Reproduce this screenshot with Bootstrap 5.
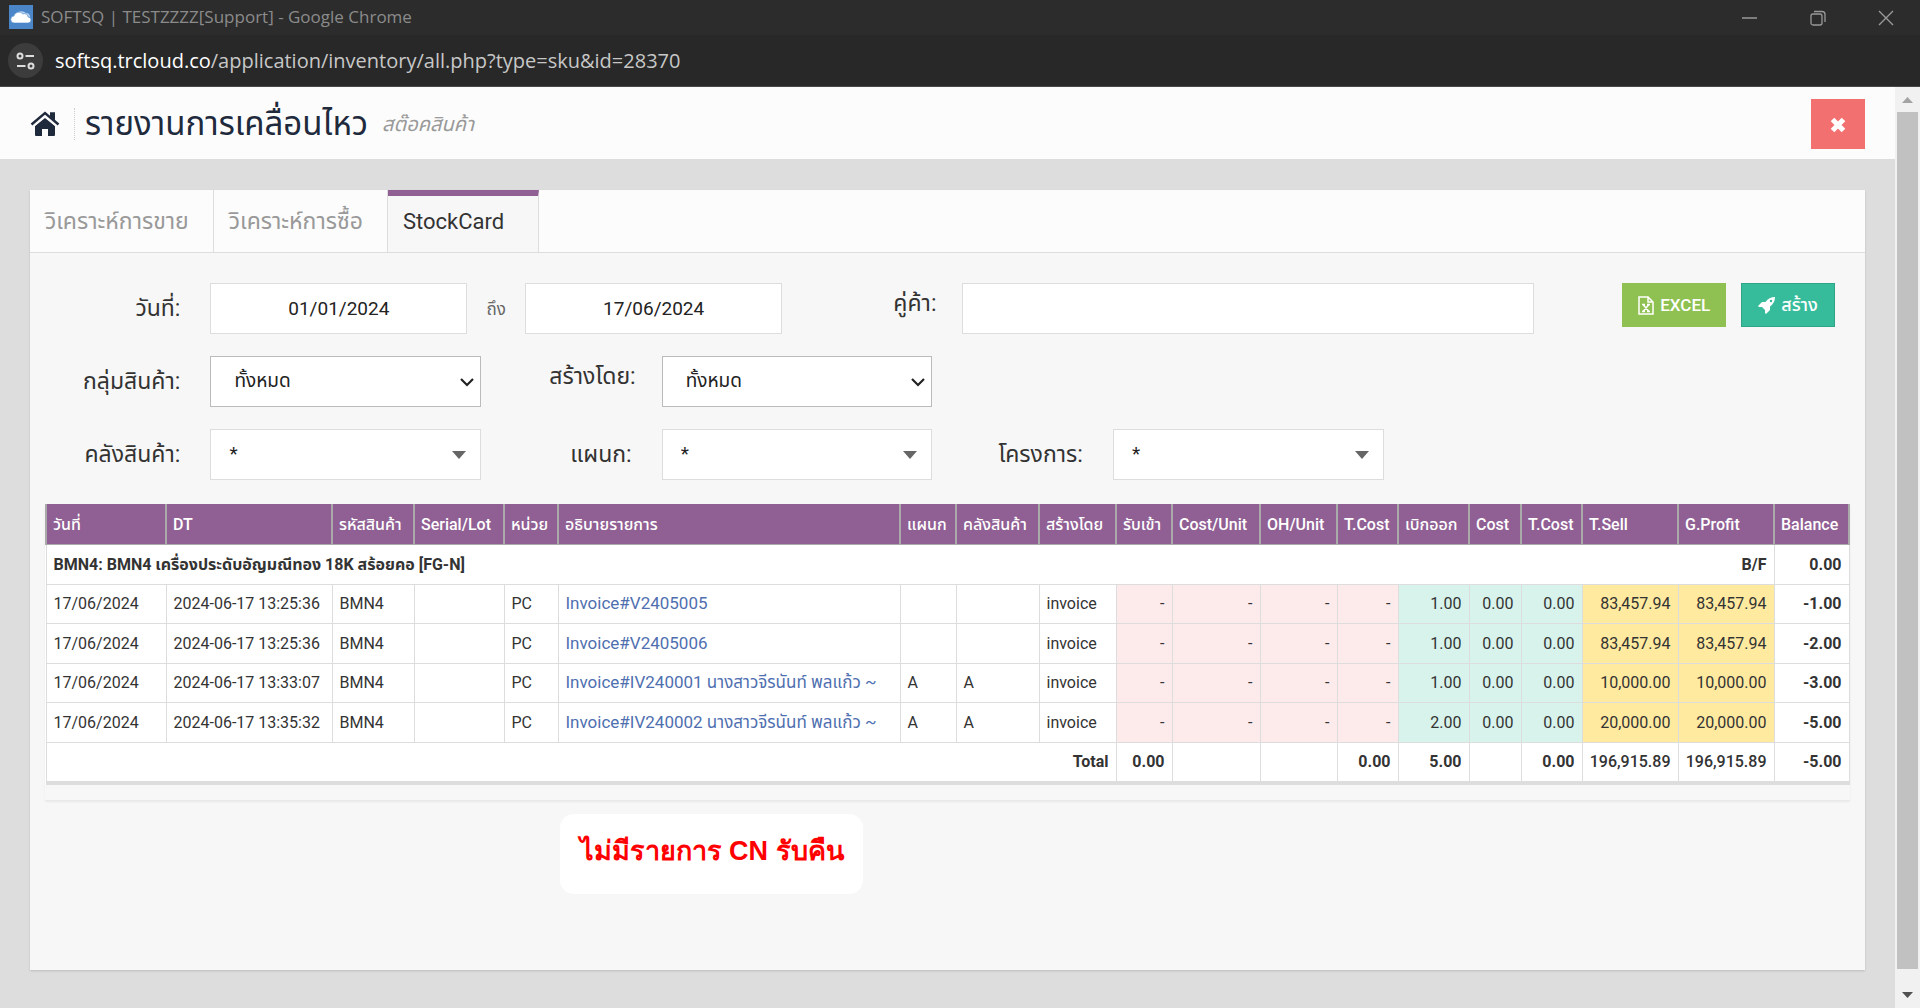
<!DOCTYPE html>
<html lang="th">
<head>
<meta charset="utf-8">
<meta name="viewport" content="width=device-width, initial-scale=1">
<title>SOFTSQ | TESTZZZZ[Support]</title>
<link href="https://cdn.jsdelivr.net/npm/bootstrap@5.3.0/dist/css/bootstrap.min.css" rel="stylesheet">
<style>
body{font-family:Roboto,"Noto Sans Thai",sans-serif;font-size:16px;line-height:24px;color:#333;background:#ddd;min-height:100vh}
.chrome-title{background:#2c2c2c;color:#8b8b8b;height:35px;font:17px/24px "Open Sans",sans-serif;padding:0 0 2px 9px}
.chrome-title button{width:68px;height:33px;background:none;border:0;padding:0;color:#999}
.chrome-url{background:#282828;color:#c7c7c7;height:52px;border-bottom:1px solid #484848;font:20px/28px "Open Sans",sans-serif;padding-left:8px}
.chrome-url b{font-weight:400;color:#fff}
.site-info{width:35px;height:35px;border-radius:50%;background:#3c3c3c;border:0;padding:0}
.page-head{background:#fcfcfc;height:72px;padding:2px 30px 0}
.home-link{color:#1f2a3c;width:45px;height:32px;border-right:1px dotted #ccc}
.page-head h1{font-size:33px;line-height:40px;font-weight:400;color:#1f2a3c;margin-left:10px}
.sub-title{font-size:20px;color:#999;margin-left:14px}
.btn-shut{width:54px;height:50px;background:#f27170;color:#fff;border-radius:0;padding:0}
.page-main{padding:31px 30px 38px}
.panel{background:#f7f7f7;box-shadow:0 1px 2px rgba(0,0,0,.15)}
.report-tabs{background:#fcfcfc;border-bottom:1px solid #ddd;height:63px}
.report-tabs .nav-link{height:62px;padding:6px 24px 4px 15px;border:0;border-right:1px solid #ddd;border-radius:0;color:#999;font-size:23px;line-height:52px}
.report-tabs .nav-link.active{background:#f7f7f7;color:#333;border-top:6px solid #906094;padding-top:0;padding-right:34px;font-size:22px}
.panel-body{padding:30px 15px 76px}
.filter-row{--bs-gutter-x:30px;margin:0 0 22px}
.filter-row label{font-size:23px;line-height:52px;text-align:right;display:block;white-space:nowrap}
.filter-row .label-high{line-height:42px;margin-right:-4px}
.filter-row [class^="col-1"]{display:flex;justify-content:flex-end;height:51px}
.box-field{height:51px;border:1px solid #ddd;border-radius:0;font-size:19px;color:#222;background-color:#fff;padding:0 20px}
.box-field.native{border-color:#bbb;background:#fff url("data:image/svg+xml,%3Csvg xmlns='http://www.w3.org/2000/svg' viewBox='0 0 14 10'%3E%3Cpath d='M1 2l6 6 6-6' fill='none' stroke='%23222' stroke-width='2.2'/%3E%3C/svg%3E") no-repeat right 6px center/14px 10px;padding-left:23px}
.box-field.search{background:#fff url("data:image/svg+xml,%3Csvg xmlns='http://www.w3.org/2000/svg' viewBox='0 0 14 8'%3E%3Cpath d='M0 0h14L7 8z' fill='%23666'/%3E%3C/svg%3E") no-repeat right 14px center/14px 8px;padding-left:18px}
.until{width:58px;font-size:17px;color:#666}
.btn-tool{height:44px;border-radius:0;color:#fff;font-size:17px;line-height:24px;font-weight:500;padding:0 15px;display:inline-flex;align-items:center;gap:6px}
.btn-excel{background:#8fc152}
.btn-make{background:#37bc9b;border:1px solid #2fa588;margin-left:15px;font-size:18px;padding:0 16px}
.stock-wrap{margin-top:24px;box-shadow:0 2px 2px rgba(0,0,0,.06);padding-bottom:15px}
.stock{width:100%;table-layout:fixed;border-collapse:collapse;background:#fff;border-bottom:4px solid #ddd;border-top:2px solid #906094}
.stock th,.stock td{border:1px solid #ddd;padding:7px;white-space:nowrap;height:39px;line-height:24px}
.stock tbody tr:nth-child(odd) > *{height:40px}
.stock thead th{background:#906094;color:#fff;border:2px solid #aaa;border-top-width:1px;border-bottom-width:1px;font-weight:500;padding:7px 6px}
.stock tbody th,.stock tfoot th,.stock tfoot td{font-weight:700}
.stock tfoot .sum{font-weight:500}
.stock .num{text-align:right}
.stock .c-in{background:#fdeaea}
.stock .c-out{background:#d8f3ec}
.stock .c-sell{background:#ffeaa0}
.stock a{color:#4f6fb0;text-decoration:none;font-size:17px;line-height:20px}
.note{margin:14px 0 0 515px;width:303px;height:80px;border-radius:14px;background:#fff;color:#f00;font:700 27px/74px "Liberation Sans",sans-serif;text-align:center;white-space:nowrap}
.rail{width:25px;background:#f1f1f1;padding:0 2px}
.rail .thumb{background:#c1c1c1}
</style>
<script src="https://cdn.jsdelivr.net/npm/bootstrap@5.3.0/dist/js/bootstrap.bundle.min.js"></script>
</head>
<body class="d-flex flex-column">
<header>
  <div class="chrome-title d-flex align-items-center">
    <svg width="24" height="24" viewBox="0 0 24 24" aria-hidden="true"><path fill="#4a86c8" d="M0 0h24v24H0z"/><path fill="#b5d0ee" d="M4 13a4 4 0 0 1 3-4 6 5 0 0 1 10-1 4 4 0 0 1 4 4z"/><path fill="#fff" stroke="#4a86c8" stroke-width=".6" d="M5.500 18a3.500 3.500 0 0 1-.5-7A5 4.500 0 0 1 14 9a3.500 3.500 0 0 1 5 3 3 3 0 0 1 0 6z"/></svg>
    <span class="ms-2 me-auto">SOFTSQ | TESTZZZZ[Support] - Google Chrome</span>
    <button type="button" aria-label="Minimize"><svg width="16" height="16" viewBox="0 0 16 16"><path d="M0 8h15" stroke="currentColor" stroke-width="1.500"/></svg></button>
    <button type="button" aria-label="Restore"><svg width="16" height="16" viewBox="0 0 16 16" fill="none" stroke="currentColor" stroke-width="1.300"><rect x="1" y="4" width="11" height="11" rx="2"/><path d="M4 1.500h8a3 3 0 0 1 3 3V12"/></svg></button>
    <button type="button" aria-label="Close window"><svg width="16" height="16" viewBox="0 0 16 16"><path d="M1 1l14 14M15 1L1 15" stroke="currentColor" stroke-width="1.400"/></svg></button>
  </div>
  <div class="chrome-url d-flex align-items-center">
    <button type="button" class="site-info d-flex align-items-center justify-content-center" aria-label="Site information"><svg width="19" height="18" viewBox="0 0 19 18" fill="none" stroke="#ddd" stroke-width="2"><circle cx="4" cy="4" r="2.500"/><path d="M9.500 4H18M1 14h8.500"/><circle cx="15" cy="14" r="2.500"/></svg></button>
    <span class="url-text ms-2 ps-1"><b>softsq.trcloud.co</b>/application/inventory/all.php?type=sku&amp;id=28370</span>
  </div>
</header>
<div class="d-flex flex-grow-1">
  <div class="flex-grow-1">
    <div class="page-head d-flex align-items-center">
      <a href="#" class="home-link d-flex align-items-center" aria-label="Home"><svg width="30" height="26" viewBox="0 0 30 26" fill="currentColor"><path d="M5 15L15 7l10 8v9q0 1-1 1h-6v-7h-6v7H6q-1 0-1-1z"/><path d="M20 1.500h5v8h-5z"/><path d="M1.500 14.500L15 3l13.500 11.500" fill="none" stroke="#fcfcfc" stroke-width="5"/><path d="M20 1.500h5v8l-5-4z"/><path d="M1.500 13.500L15 2l13.500 11.500" fill="none" stroke="currentColor" stroke-width="2.400"/></svg></a>
      <h1 class="mb-0">รายงานการเคลื่อนไหว</h1>
      <em class="sub-title me-auto">สต๊อคสินค้า</em>
      <button type="button" class="btn btn-shut" aria-label="Close"><svg width="16" height="16" viewBox="0 0 16 16"><path d="M2.500 2.500l11 11M13.500 2.500l-11 11" stroke="#fff" stroke-width="5"/></svg></button>
    </div>
    <main class="page-main">
      <div class="panel">
        <nav class="report-tabs nav">
          <a class="nav-link" href="#">วิเคราะห์การขาย</a>
          <a class="nav-link" href="#">วิเคราะห์การซื้อ</a>
          <a class="nav-link active" href="#" aria-current="page">StockCard</a>
        </nav>
        <div class="panel-body">
          <form>
            <div class="row filter-row">
              <div class="col-1"><label for="d1">วันที่:</label></div>
              <div class="col-4 d-flex align-items-center">
                <input id="d1" class="form-control box-field text-center" value="01/01/2024">
                <span class="until flex-shrink-0 text-center">ถึง</span>
                <input class="form-control box-field text-center" value="17/06/2024" aria-label="ถึง">
              </div>
              <div class="col-1"><label class="label-high" for="partner">คู่ค้า:</label></div>
              <div class="col-4"><input id="partner" class="form-control box-field"></div>
              <div class="col-2 d-flex justify-content-end align-items-start">
                <button type="button" class="btn btn-tool btn-excel"><svg width="16" height="19" viewBox="0 0 16 19" fill="none" stroke="#fff" stroke-width="1.500"><path d="M1 1h9l5 5v12H1zM10 1v5h5"/><path d="M5 8.500l6 7M11 8.500l-6 7M4 8.500h3M9 8.500h3M4 15.500h3M9 15.500h3"/></svg>EXCEL</button>
                <button type="button" class="btn btn-tool btn-make"><svg width="17" height="17" viewBox="0 0 17 17" fill="#fff"><path fill-rule="evenodd" d="M17 0q0 6-5 9.500V13l-4 4-1-1v-3L4 10H1L0 9l4-4h3.500Q11 0 17 0zM13 5.200a1.200 1.200 0 1 0 0-2.400 1.200 1.200 0 0 0 0 2.400z"/></svg>สร้าง</button>
              </div>
            </div>
            <div class="row filter-row">
              <div class="col-1"><label for="grp">กลุ่มสินค้า:</label></div>
              <div class="col-2"><select id="grp" class="form-select box-field native"><option>ทั้งหมด</option></select></div>
              <div class="col-1"><label class="label-high" for="maker">สร้างโดย:</label></div>
              <div class="col-2"><select id="maker" class="form-select box-field native"><option>ทั้งหมด</option></select></div>
            </div>
            <div class="row filter-row mb-0">
              <div class="col-1"><label for="wh">คลังสินค้า:</label></div>
              <div class="col-2"><select id="wh" class="form-select box-field search"><option>*</option></select></div>
              <div class="col-1"><label for="dep">แผนก:</label></div>
              <div class="col-2"><select id="dep" class="form-select box-field search"><option>*</option></select></div>
              <div class="col-1"><label for="proj">โครงการ:</label></div>
              <div class="col-2"><select id="proj" class="form-select box-field search"><option>*</option></select></div>
            </div>
          </form>
          <div class="stock-wrap">
          <table class="stock">
            <colgroup><col style="width:120px"><col style="width:166px"><col style="width:82px"><col style="width:90px"><col style="width:54px"><col><col style="width:56px"><col style="width:83px"><col style="width:77px"><col style="width:56px"><col style="width:88px"><col style="width:77px"><col style="width:61px"><col style="width:71px"><col style="width:52px"><col style="width:61px"><col style="width:96px"><col style="width:96px"><col style="width:75px"></colgroup>
            <thead><tr><th>วันที่</th><th>DT</th><th>รหัสสินค้า</th><th>Serial/Lot</th><th>หน่วย</th><th>อธิบายรายการ</th><th>แผนก</th><th>คลังสินค้า</th><th>สร้างโดย</th><th>รับเข้า</th><th>Cost/Unit</th><th>OH/Unit</th><th>T.Cost</th><th>เบิกออก</th><th>Cost</th><th>T.Cost</th><th>T.Sell</th><th>G.Profit</th><th>Balance</th></tr></thead>
            <tbody>
              <tr><th colspan="9" class="border-end-0">BMN4: BMN4 เครื่องประดับอัญมณีทอง 18K สร้อยคอ [FG-N]</th><th colspan="9" class="num border-start-0">B/F</th><th class="num">0.00</th></tr>
              <tr><td>17/06/2024</td><td>2024-06-17 13:25:36</td><td>BMN4</td><td></td><td>PC</td><td><a href="#">Invoice#V2405005</a></td><td></td><td></td><td>invoice</td><td class="num c-in">-</td><td class="num c-in">-</td><td class="num c-in">-</td><td class="num c-in">-</td><td class="num c-out">1.00</td><td class="num c-out">0.00</td><td class="num c-out">0.00</td><td class="num c-sell">83,457.94</td><td class="num c-sell">83,457.94</td><th class="num">-1.00</th></tr>
              <tr><td>17/06/2024</td><td>2024-06-17 13:25:36</td><td>BMN4</td><td></td><td>PC</td><td><a href="#">Invoice#V2405006</a></td><td></td><td></td><td>invoice</td><td class="num c-in">-</td><td class="num c-in">-</td><td class="num c-in">-</td><td class="num c-in">-</td><td class="num c-out">1.00</td><td class="num c-out">0.00</td><td class="num c-out">0.00</td><td class="num c-sell">83,457.94</td><td class="num c-sell">83,457.94</td><th class="num">-2.00</th></tr>
              <tr><td>17/06/2024</td><td>2024-06-17 13:33:07</td><td>BMN4</td><td></td><td>PC</td><td><a href="#">Invoice#IV240001 นางสาวจีรนันท์ พลแก้ว ~</a></td><td>A</td><td>A</td><td>invoice</td><td class="num c-in">-</td><td class="num c-in">-</td><td class="num c-in">-</td><td class="num c-in">-</td><td class="num c-out">1.00</td><td class="num c-out">0.00</td><td class="num c-out">0.00</td><td class="num c-sell">10,000.00</td><td class="num c-sell">10,000.00</td><th class="num">-3.00</th></tr>
              <tr><td>17/06/2024</td><td>2024-06-17 13:35:32</td><td>BMN4</td><td></td><td>PC</td><td><a href="#">Invoice#IV240002 นางสาวจีรนันท์ พลแก้ว ~</a></td><td>A</td><td>A</td><td>invoice</td><td class="num c-in">-</td><td class="num c-in">-</td><td class="num c-in">-</td><td class="num c-in">-</td><td class="num c-out">2.00</td><td class="num c-out">0.00</td><td class="num c-out">0.00</td><td class="num c-sell">20,000.00</td><td class="num c-sell">20,000.00</td><th class="num">-5.00</th></tr>
            </tbody>
            <tfoot><tr><th colspan="9" class="num">Total</th><td class="num">0.00</td><td></td><td></td><td class="num">0.00</td><td class="num">5.00</td><td></td><td class="num">0.00</td><td class="num sum">196,915.89</td><td class="num sum">196,915.89</td><td class="num">-5.00</td></tr></tfoot>
          </table>
          </div>
          <p class="note">ไม่มีรายการ CN รับคืน</p>
        </div>
      </div>
    </main>
  </div>
  <div class="rail d-flex flex-column" aria-hidden="true">
    <svg width="21" height="25" viewBox="0 0 21 25"><path d="M5 16l5.500-6 5.500 6z" fill="#a3a3a3"/></svg>
    <div class="thumb flex-grow-1"></div>
    <svg width="21" height="39" viewBox="0 0 21 39"><path d="M5 23l5.500 6 5.500-6z" fill="#505050"/></svg>
  </div>
</div>
</body>
</html>
